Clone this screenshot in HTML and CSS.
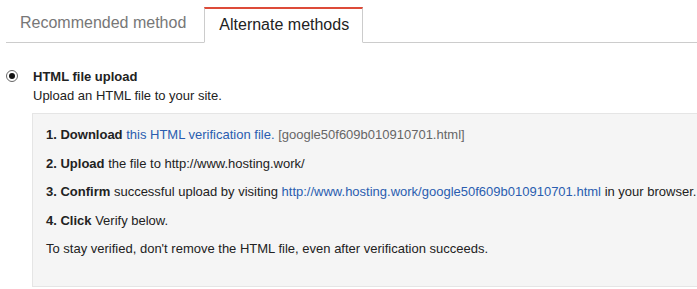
FILE: index.html
```html
<!DOCTYPE html>
<html lang="en">
<head>
    <meta charset="UTF-8">
    <meta name="viewport" content="width=device-width, initial-scale=1.0">
    <title>Verification methods</title>
    <link rel="stylesheet" href="styles.css">
</head>
<body>
    <div class="tabs">
        <div class="tab">Recommended method</div>
        <div class="tab active">Alternate methods</div>
    </div>

    <div class="method">
        <span class="radio"><span class="dot"></span></span>
        <div class="method-body">
            <div class="method-title">HTML file upload</div>
            <div class="method-desc">Upload an HTML file to your site.</div>

            <div class="steps">
                <p><b>1. Download</b> <a href="#">this HTML verification file.</a> <span class="muted">[google50f609b010910701.html]</span></p>
                <p><b>2. Upload</b> the file to http://www.hosting.work/</p>
                <p><b>3. Confirm</b> successful upload by visiting <a href="#">http://www.hosting.work/google50f609b010910701.html</a> in your browser.</p>
                <p><b>4. Click</b> Verify below.</p>
                <p>To stay verified, don't remove the HTML file, even after verification succeeds.</p>
            </div>
        </div>
    </div>
</body>
</html>
```

FILE: styles.css
```css
body {
    margin: 0;
    font-family: "Liberation Sans", Arial, sans-serif;
    font-size: 13px;
    color: #222;
    background-color: white;
}

.tabs {
    display: flex;
    margin-left: 6px;
    padding-top: 7px;
    border-bottom: 1px solid #ccc;
}

.tab {
    height: 33px;
    line-height: 32px;
    padding: 0 18px 0 14px;
    font-size: 16px;
    color: #777;
}

.tab.active {
    padding: 0 13px 0 14px;
    color: #222;
    background-color: white;
    border: 1px solid #ccc;
    border-top: 2px solid #dd4b39;
    border-bottom: 1px solid white;
    margin-bottom: -1px;
}

.method {
    display: flex;
    padding: 26px 0 0 6px;
}

.radio {
    width: 10px;
    height: 10px;
    border: 1px solid #666;
    border-radius: 50%;
    display: flex;
    align-items: center;
    justify-content: center;
    margin-top: 1px;
    flex-shrink: 0;
}

.radio .dot {
    width: 6px;
    height: 6px;
    border-radius: 50%;
    background-color: #111;
}

.method-body {
    margin-left: 14px;
    flex: 1;
    min-width: 0;
}

.method-title {
    font-weight: bold;
    line-height: 15px;
    margin-left: 1px;
}

.method-desc {
    line-height: 15px;
    margin: 4px 0 0 1px;
}

.steps {
    margin-top: 10px;
    padding: 13px 0 16px 13px;
    background-color: #f5f5f5;
    border: 1px solid #e5e5e5;
    border-right: none;
    overflow: hidden;
}

.steps p {
    margin: 0 0 12.5px;
    line-height: 16px;
    white-space: nowrap;
}

.steps a {
    color: #2a5db0;
    text-decoration: none;
}

.muted {
    color: #666;
}
```
